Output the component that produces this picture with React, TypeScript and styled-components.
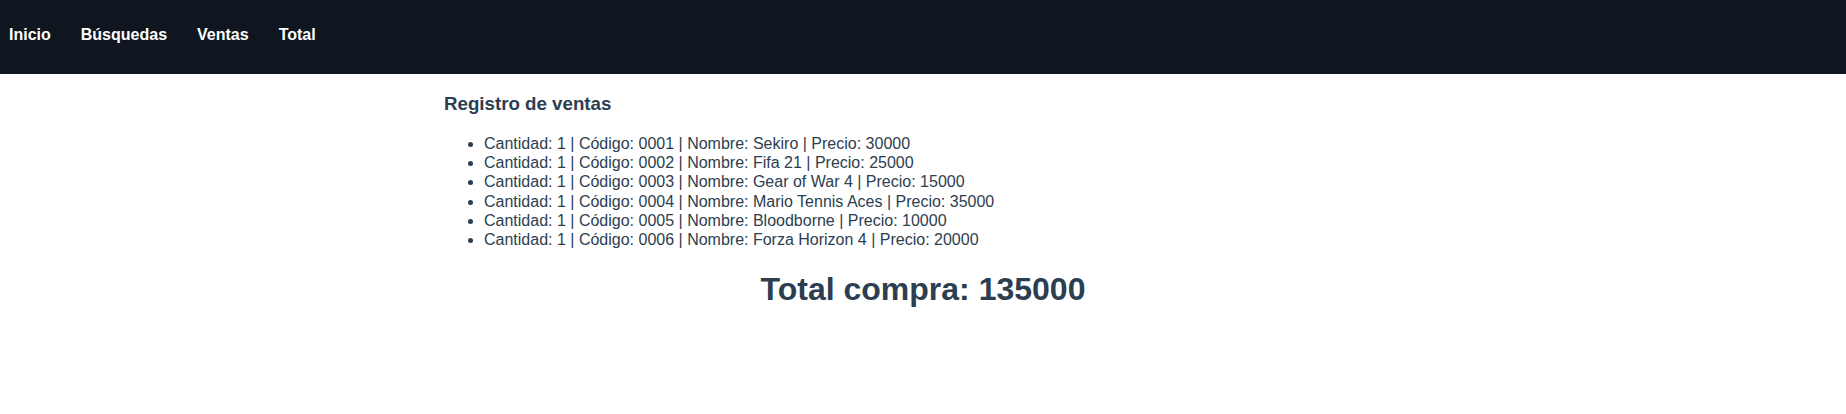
import styled, { createGlobalStyle } from 'styled-components';

const GlobalStyle = createGlobalStyle`
  html, body {
    margin: 0;
    padding: 0;
    background: #ffffff;
  }
  body {
    font-family: "Liberation Sans", Arial, Helvetica, sans-serif;
    color: #2c3e50;
  }
`;

const NavBar = styled.nav`
  display: flex;
  align-items: flex-start;
  gap: 30px;
  height: 74px;
  box-sizing: border-box;
  padding: 26px 9px 0;
  background: #0f1620;
`;

const NavLink = styled.a`
  color: #ffffff;
  font-size: 16px;
  font-weight: 700;
  text-decoration: none;
  cursor: pointer;
`;

const Container = styled.main`
  width: 960px;
  margin: 0 auto;
  padding-top: 19px;
`;

const Heading = styled.h3`
  margin: 0 0 19px 1px;
  font-size: 18.72px;
  font-weight: 700;
`;

const SalesList = styled.ul`
  margin: 0 0 22px;
  padding-left: 41px;
  font-size: 16px;
  line-height: 19.2px;
`;

const Total = styled.h1`
  margin: 0;
  text-align: center;
  font-size: 32px;
  font-weight: 700;
`;

const sales = [
  { qty: 1, code: '0001', name: 'Sekiro', price: 30000 },
  { qty: 1, code: '0002', name: 'Fifa 21', price: 25000 },
  { qty: 1, code: '0003', name: 'Gear of War 4', price: 15000 },
  { qty: 1, code: '0004', name: 'Mario Tennis Aces', price: 35000 },
  { qty: 1, code: '0005', name: 'Bloodborne', price: 10000 },
  { qty: 1, code: '0006', name: 'Forza Horizon 4', price: 20000 },
];

const App = () => {
  const links = ['Inicio', 'Búsquedas', 'Ventas', 'Total'];
  const total = sales.reduce((sum, s) => sum + s.qty * s.price, 0);

  return (
    <>
      <GlobalStyle />
      <NavBar>
        {links.map((label) => (
          <NavLink key={label}>{label}</NavLink>
        ))}
      </NavBar>
      <Container>
        <Heading>Registro de ventas</Heading>
        <SalesList>
          {sales.map((s) => (
            <li key={s.code}>
              Cantidad: {s.qty} | Código: {s.code} | Nombre: {s.name} | Precio: {s.price}
            </li>
          ))}
        </SalesList>
        <Total>Total compra: {total}</Total>
      </Container>
    </>
  );
};

export default App;
